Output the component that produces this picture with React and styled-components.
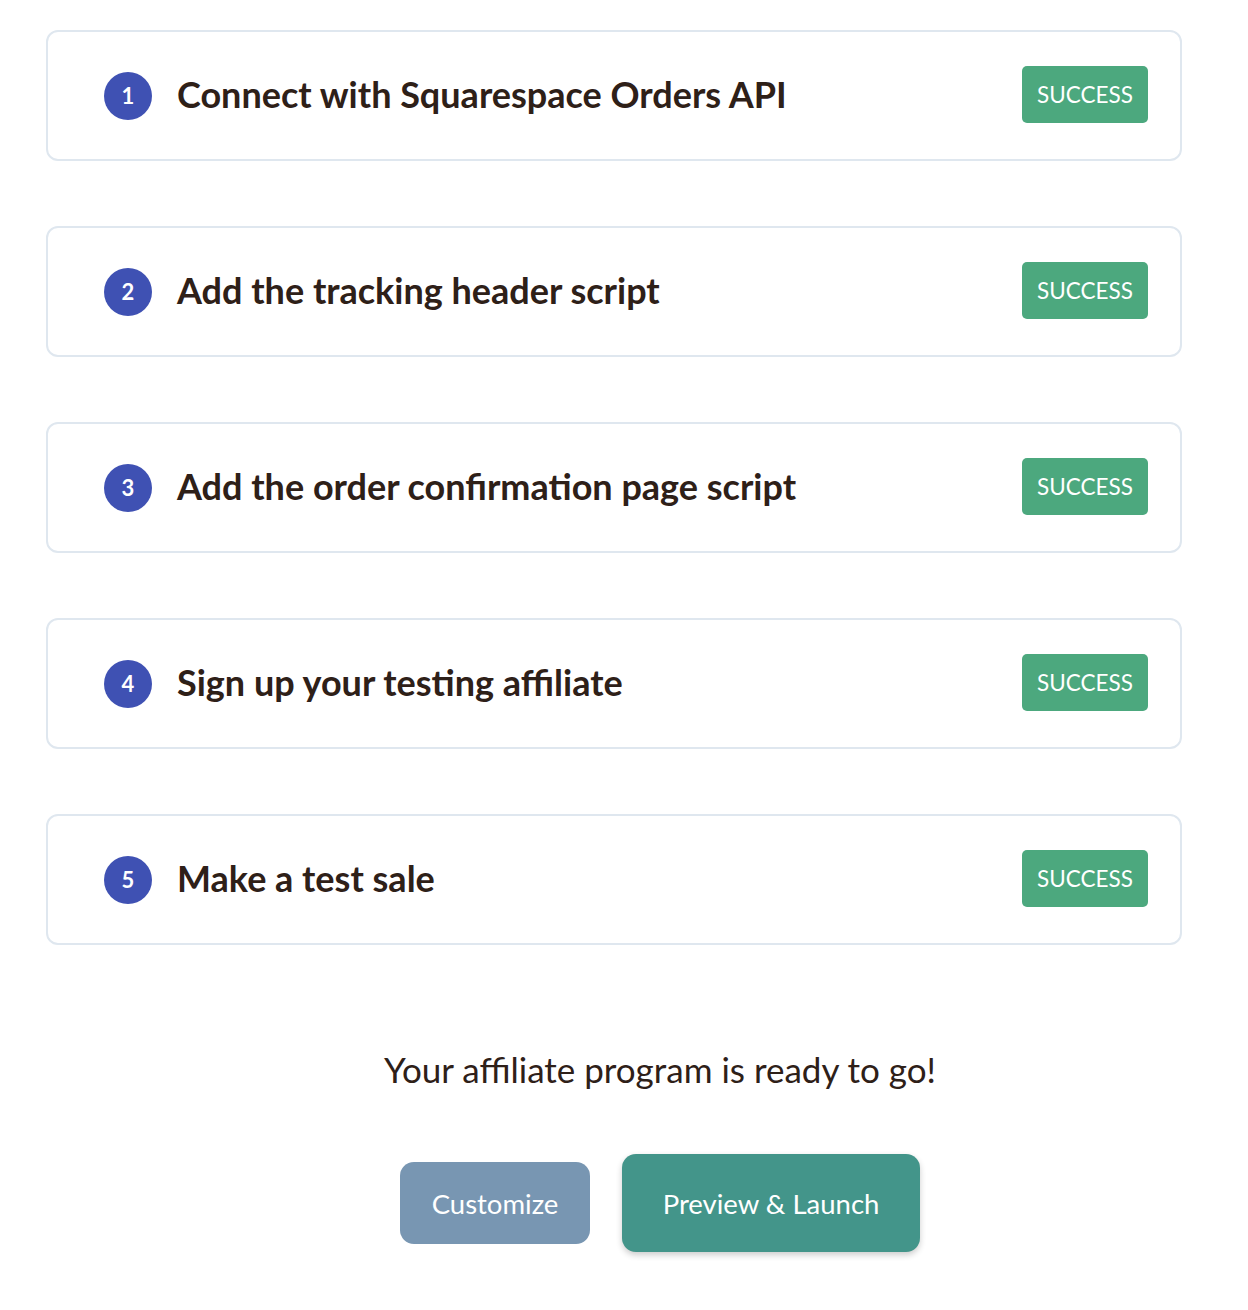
import React from "react";
import styled, { createGlobalStyle } from "styled-components";

const Global = createGlobalStyle`
  html, body { margin: 0; padding: 0; background: #fff; }
  body { font-family: Lato, "Noto Sans", sans-serif; color: #2e2018; }
`;

const Page = styled.div`
  width: 1248px;
  padding: 30px 0 40px;
  box-sizing: border-box;
`;

const List = styled.div`
  display: flex;
  flex-direction: column;
  gap: 65px;
  margin: 0 66px 0 46px;
`;

const Card = styled.div`
  height: 131px;
  box-sizing: border-box;
  border: 2px solid #dfe7ef;
  border-radius: 12px;
  display: flex;
  align-items: center;
  padding: 0 32px 0 56px;
`;

const Num = styled.div`
  width: 48px;
  height: 48px;
  border-radius: 50%;
  background: #3f51b3;
  color: #fff;
  font-size: 22px;
  font-weight: 700;
  display: flex;
  align-items: center;
  justify-content: center;
  flex: none;
`;

const Title = styled.div`
  margin-left: 25px;
  font-size: 36px;
  font-weight: 700;
  flex: 1;
  margin-top: -4px;
`;

const Badge = styled.div`
  width: 126px;
  height: 57px;
  border-radius: 5px;
  background: #4ca87e;
  color: #fff;
  font-size: 22.5px;
  display: flex;
  align-items: center;
  justify-content: center;
  margin-top: -2px;
`;

const Footer = styled.div`
  display: flex;
  flex-direction: column;
  align-items: center;
  margin-left: 72px;
  padding-top: 103px;
`;

const Ready = styled.div`
  font-size: 35px;
`;

const Buttons = styled.div`
  display: flex;
  align-items: center;
  gap: 32px;
  margin-top: 64px;
`;

const Button = styled.button`
  font-family: inherit;
  border: none;
  color: #fff;
  font-size: 27.5px;
  border-radius: 14px;
  background: ${(p) => (p.$primary ? "#43958a" : "#7896b2")};
  width: ${(p) => (p.$primary ? "298px" : "190px")};
  height: ${(p) => (p.$primary ? "98px" : "82px")};
  box-shadow: ${(p) => (p.$primary ? "0 3px 6px rgba(0,0,0,0.2)" : "none")};
`;

const steps = [
  "Connect with Squarespace Orders API",
  "Add the tracking header script",
  "Add the order confirmation page script",
  "Sign up your testing affiliate",
  "Make a test sale",
];

export default function App() {
  return (
    <Page>
      <Global />
      <List>
        {steps.map((s, i) => (
          <Card key={s}>
            <Num>{i + 1}</Num>
            <Title>{s}</Title>
            <Badge>SUCCESS</Badge>
          </Card>
        ))}
      </List>
      <Footer>
        <Ready>Your affiliate program is ready to go!</Ready>
        <Buttons>
          <Button>Customize</Button>
          <Button $primary>Preview &amp; Launch</Button>
        </Buttons>
      </Footer>
    </Page>
  );
}
